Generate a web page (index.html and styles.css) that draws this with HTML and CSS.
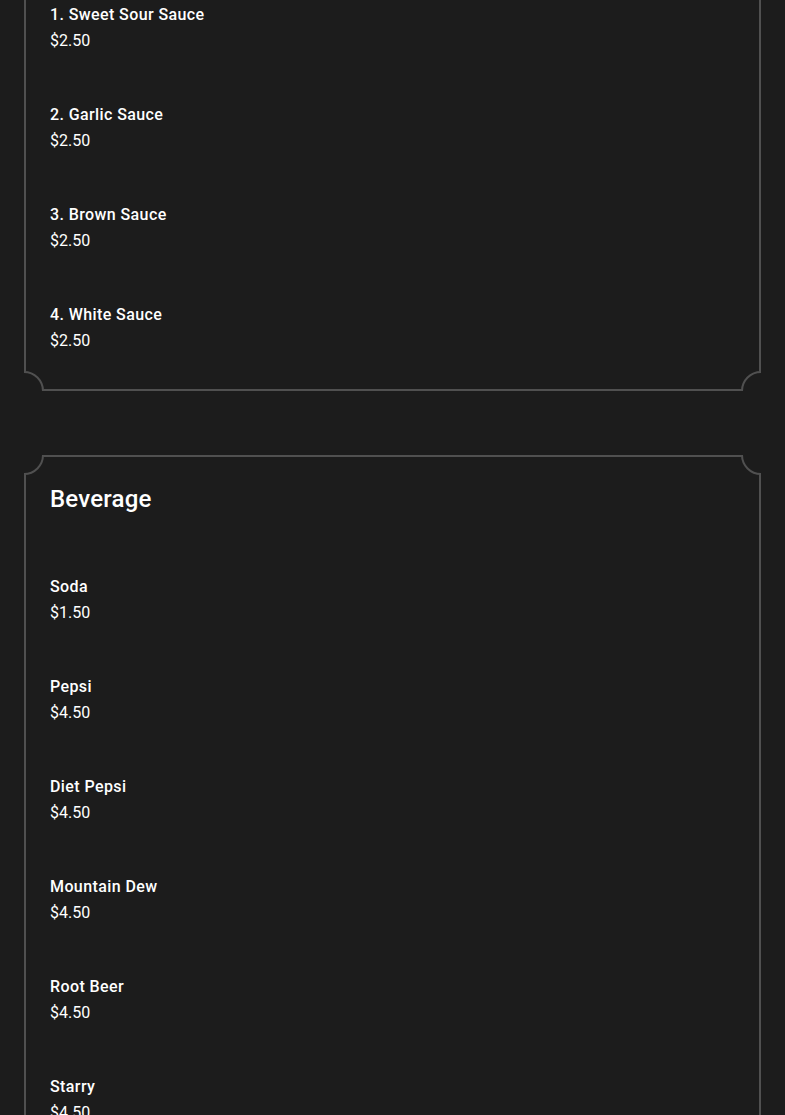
FILE: index.html
```html
<!DOCTYPE html>
<html lang="en">
<head>
<meta charset="utf-8">
<title>Menu</title>
<link rel="stylesheet" href="styles.css">
</head>
<body>
<main class="menu">
  <section class="card card-first">
    <span class="corner tl"></span><span class="corner tr"></span><span class="corner bl"></span><span class="corner br"></span>
    <h2 class="card-title">Sauce</h2>
    <ul class="items">
      <li class="item"><div class="item-name">1. Sweet Sour Sauce</div><div class="item-price">$2.50</div></li>
      <li class="item"><div class="item-name">2. Garlic Sauce</div><div class="item-price">$2.50</div></li>
      <li class="item"><div class="item-name">3. Brown Sauce</div><div class="item-price">$2.50</div></li>
      <li class="item"><div class="item-name">4. White Sauce</div><div class="item-price">$2.50</div></li>
    </ul>
  </section>
  <section class="card">
    <span class="corner tl"></span><span class="corner tr"></span><span class="corner bl"></span><span class="corner br"></span>
    <h2 class="card-title">Beverage</h2>
    <ul class="items">
      <li class="item"><div class="item-name">Soda</div><div class="item-price">$1.50</div></li>
      <li class="item"><div class="item-name">Pepsi</div><div class="item-price">$4.50</div></li>
      <li class="item"><div class="item-name">Diet Pepsi</div><div class="item-price">$4.50</div></li>
      <li class="item"><div class="item-name">Mountain Dew</div><div class="item-price">$4.50</div></li>
      <li class="item"><div class="item-name">Root Beer</div><div class="item-price">$4.50</div></li>
      <li class="item"><div class="item-name">Starry</div><div class="item-price">$4.50</div></li>
      <li class="item"><div class="item-name">Water</div><div class="item-price">$1.50</div></li>
    </ul>
  </section>
</main>
</body>
</html>
```
FILE: styles.css
```css
html, body {
  margin: 0;
  padding: 0;
  background: #1c1c1c;
  color: #ffffff;
  font-family: Roboto, "Liberation Sans", sans-serif;
}
.menu {
  display: flex;
  flex-direction: column;
  gap: 64px;
  padding: 0 24px 40px;
}
.card {
  position: relative;
  overflow: hidden;
  box-shadow: inset 0 0 0 2px #505050;
  padding: 29px 26px 38px;
}
.card-first {
  margin-top: -117px;
}
.corner {
  position: absolute;
  width: 36px;
  height: 36px;
  border: 2px solid #505050;
  border-radius: 50%;
  background: #1c1c1c;
}
.corner.tl { top: -20px; left: -20px; }
.corner.tr { top: -20px; right: -20px; }
.corner.bl { bottom: -20px; left: -20px; }
.corner.br { bottom: -20px; right: -20px; }
.card-title {
  margin: 0 0 61px;
  font-size: 24px;
  line-height: 30px;
  font-weight: 500;
  letter-spacing: 0.2px;
  color: #ffffff;
}
.items {
  list-style: none;
  margin: 0;
  padding: 0;
  display: flex;
  flex-direction: column;
  gap: 50px;
}
.item-name {
  font-size: 16px;
  line-height: 24px;
  font-weight: 500;
  letter-spacing: 0.4px;
  color: #ffffff;
}
.item-price {
  margin-top: 2px;
  font-size: 16px;
  line-height: 24px;
  font-weight: 400;
  color: #ffffff;
}
```
